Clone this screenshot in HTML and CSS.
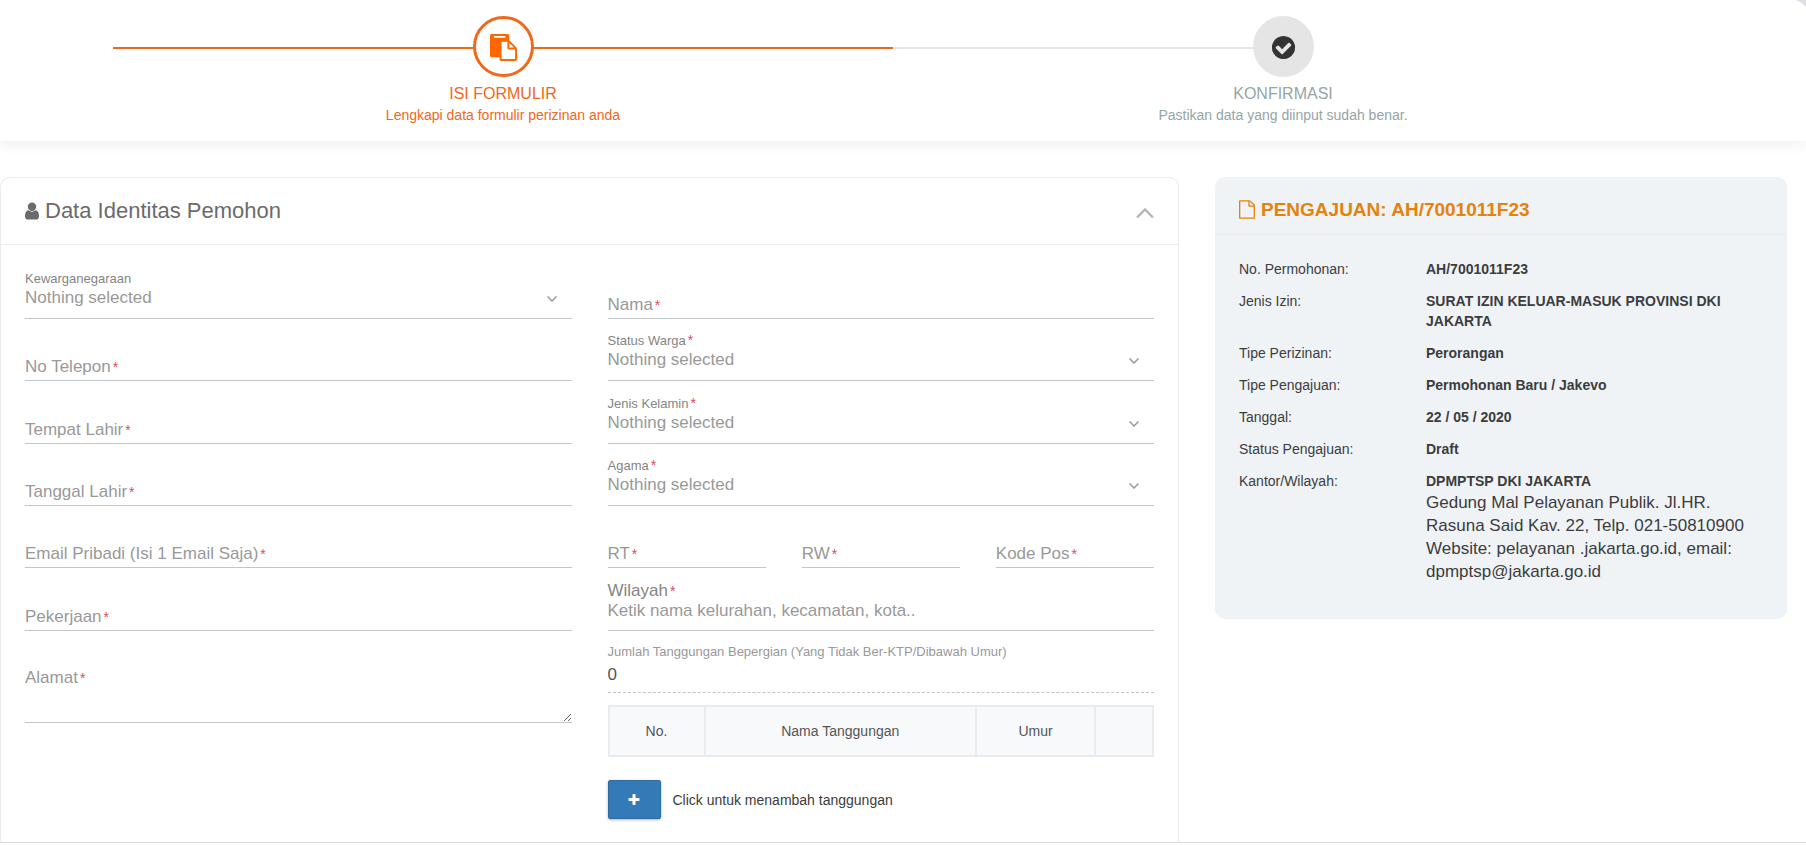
FILE: index.html
```html
<!DOCTYPE html>
<html lang="id">
<head>
<meta charset="utf-8">
<title>Formulir Perizinan</title>
<link rel="stylesheet" href="styles.css">
</head>
<body>
<header class="wizard">
  <ol class="steps">
    <li class="step step-active">
      <span class="step-mark"><svg width="27" height="27" viewBox="0 0 1792 1792" aria-hidden="true"><path fill="currentColor" d="M768 1664h896v-640h-416q-40 0-68-28t-28-68v-416h-384v1152zm256-1440v-64q0-13-9.5-22.5t-22.5-9.5h-704q-13 0-22.5 9.5t-9.5 22.5v64q0 13 9.5 22.5t22.5 9.5h704q13 0 22.5-9.5t9.5-22.5zm256 672h299l-299-299v299zm512 128v672q0 40-28 68t-68 28h-960q-40 0-68-28t-28-68v-160h-544q-40 0-68-28t-28-68v-1344q0-40 28-68t68-28h1088q40 0 68 28t28 68v328q21 13 36 28l408 408q28 28 48 76t20 88z"/></svg></span>
      <span class="step-title">ISI FORMULIR</span>
      <span class="step-note">Lengkapi data formulir perizinan anda</span>
    </li>
    <li class="step step-last">
      <span class="step-mark"><svg width="27" height="27" viewBox="0 0 1792 1792" aria-hidden="true"><path fill="currentColor" d="M1412 734q0-28-18-46l-91-90q-19-19-45-19t-45 19l-408 407-226-226q-19-19-45-19t-45 19l-91 90q-18 18-18 46 0 27 18 45l362 362q19 19 45 19 27 0 46-19l543-543q18-18 18-45zm252 162q0 209-103 385.5t-279.5 279.5-385.5 103-385.5-103-279.5-279.5-103-385.5 103-385.5 279.5-279.5 385.5-103 385.5 103 279.5 279.5 103 385.5z"/></svg></span>
      <span class="step-title">KONFIRMASI</span>
      <span class="step-note">Pastikan data yang diinput sudah benar.</span>
    </li>
  </ol>
  <svg class="corner" width="10" height="7" viewBox="0 0 10 7" aria-hidden="true"><path fill="#dcdfe3" d="M0 0h10v7Q6 2 0 0z"/></svg>
</header>

<main class="content">
  <form class="card">
    <div class="card-head">
      <svg width="14" height="20" viewBox="256 0 1280 1792" aria-hidden="true"><path fill="currentColor" d="M1536 1399q0 109-62.5 187t-150.5 78h-854q-88 0-150.5-78t-62.5-187q0-85 8.5-160.5t31.5-152 58.5-131 94-89 134.5-34.5q131 128 313 128t313-128q76 0 134.5 34.5t94 89 58.5 131 31.5 152 8.5 160.5zm-256-887q0 159-112.5 271.5t-271.5 112.5-271.5-112.5-112.5-271.5 112.5-271.5 271.5-112.5 271.5 112.5 112.5 271.5z"/></svg>
      <h2>Data Identitas Pemohon</h2>
      <button type="button" class="collapse" aria-label="Tutup panel"><svg width="18" height="11" viewBox="0 0 18 11" aria-hidden="true"><path fill="none" stroke="#b4b4b4" stroke-width="2.4" d="M1 9.5l8-8 8 8"/></svg></button>
    </div>
    <div class="card-body">
      <div class="column">
        <div class="field">
          <label class="small" for="warga">Kewarganegaraan</label>
          <div class="pick"><select id="warga"><option>Nothing selected</option></select><svg width="10" height="6" viewBox="0 0 10 6" aria-hidden="true"><path stroke-width="1.5" d="M.5.5L5 5 9.5.5"/></svg></div>
        </div>
        <div class="field float"><label for="telepon">No Telepon<i>*</i></label><input id="telepon" type="text"></div>
        <div class="field float"><label for="tempat">Tempat Lahir<i>*</i></label><input id="tempat" type="text"></div>
        <div class="field float"><label for="tanggal">Tanggal Lahir<i>*</i></label><input id="tanggal" type="text"></div>
        <div class="field float"><label for="email">Email Pribadi (Isi 1 Email Saja)<i>*</i></label><input id="email" type="text"></div>
        <div class="field float"><label for="kerja">Pekerjaan<i>*</i></label><input id="kerja" type="text"></div>
        <div class="field float area"><label for="alamat">Alamat<i>*</i></label><textarea id="alamat"></textarea></div>
      </div>
      <div class="column">
        <div class="field float"><label for="nama">Nama<i>*</i></label><input id="nama" type="text"></div>
        <div class="field">
          <label class="small" for="status">Status Warga<i>*</i></label>
          <div class="pick"><select id="status"><option>Nothing selected</option></select><svg width="10" height="6" viewBox="0 0 10 6" aria-hidden="true"><path stroke-width="1.5" d="M.5.5L5 5 9.5.5"/></svg></div>
        </div>
        <div class="field">
          <label class="small" for="kelamin">Jenis Kelamin<i>*</i></label>
          <div class="pick"><select id="kelamin"><option>Nothing selected</option></select><svg width="10" height="6" viewBox="0 0 10 6" aria-hidden="true"><path stroke-width="1.5" d="M.5.5L5 5 9.5.5"/></svg></div>
        </div>
        <div class="field">
          <label class="small" for="agama">Agama<i>*</i></label>
          <div class="pick"><select id="agama"><option>Nothing selected</option></select><svg width="10" height="6" viewBox="0 0 10 6" aria-hidden="true"><path stroke-width="1.5" d="M.5.5L5 5 9.5.5"/></svg></div>
        </div>
        <div class="field trio">
          <div class="float"><label for="rt">RT<i>*</i></label><input id="rt" type="text"></div>
          <div class="float"><label for="rw">RW<i>*</i></label><input id="rw" type="text"></div>
          <div class="float"><label for="pos">Kode Pos<i>*</i></label><input id="pos" type="text"></div>
        </div>
        <div class="field">
          <label class="strong" for="wilayah">Wilayah<i>*</i></label>
          <input class="typed" id="wilayah" type="text" placeholder="Ketik nama kelurahan, kecamatan, kota..">
        </div>
        <div class="field">
          <label class="small pale" for="jumlah">Jumlah Tanggungan Bepergian (Yang Tidak Ber-KTP/Dibawah Umur)</label>
          <input class="typed count" id="jumlah" type="text" value="0" readonly>
        </div>
        <table class="dependants">
          <thead><tr><th class="c-no">No.</th><th>Nama Tanggungan</th><th class="c-age">Umur</th><th class="c-action"></th></tr></thead>
        </table>
        <div class="add">
          <button type="button" id="tambah" aria-label="Tambah"><svg width="14" height="14" viewBox="0 0 1792 1792" aria-hidden="true"><path fill="currentColor" d="M1600 736v192q0 40-28 68t-68 28h-416v416q0 40-28 68t-68 28h-192q-40 0-68-28t-28-68v-416h-416q-40 0-68-28t-28-68v-192q0-40 28-68t68-28h416v-416q0-40 28-68t68-28h192q40 0 68 28t28 68v416h416q40 0 68 28t28 68z"/></svg></button>
          <label for="tambah">Click untuk menambah tanggungan</label>
        </div>
      </div>
    </div>
  </form>

  <aside class="summary">
    <div class="summary-head">
      <svg width="16" height="19" viewBox="128 0 1536 1792" aria-hidden="true"><path fill="currentColor" d="M1596 380q28 28 48 76t20 88v1152q0 40-28 68t-68 28h-1344q-40 0-68-28t-28-68v-1600q0-40 28-68t68-28h896q40 0 88 20t76 48zm-444-244v376h376q-10-29-22-41l-313-313q-12-12-41-22zm384 1528v-1024h-416q-40 0-68-28t-28-68v-416h-768v1536h1280z"/></svg>
      <h2>PENGAJUAN: AH/7001011F23</h2>
    </div>
    <dl>
      <dt>No. Permohonan:</dt><dd>AH/7001011F23</dd>
      <dt>Jenis Izin:</dt><dd>SURAT IZIN KELUAR-MASUK PROVINSI DKI JAKARTA</dd>
      <dt>Tipe Perizinan:</dt><dd>Perorangan</dd>
      <dt>Tipe Pengajuan:</dt><dd>Permohonan Baru / Jakevo</dd>
      <dt>Tanggal:</dt><dd>22 / 05 / 2020</dd>
      <dt>Status Pengajuan:</dt><dd>Draft</dd>
      <dt>Kantor/Wilayah:</dt><dd>DPMPTSP DKI JAKARTA<p>Gedung Mal Pelayanan Publik. Jl.HR. Rasuna Said Kav. 22, Telp. 021-50810900 Website: pelayanan .jakarta.go.id, email: dpmptsp@jakarta.go.id</p></dd>
    </dl>
  </aside>
</main>
</body>
</html>
```
FILE: styles.css
```css
* { box-sizing: border-box; }

body {
  margin: 0;
  background: #fff;
  color: #3c3c3e;
  font-family: "Liberation Sans", Arial, sans-serif;
  font-size: 14px;
}

h2, p, dl, dd, ol { margin: 0; padding: 0; }
svg { display: block; }

/* wizard steps */
.wizard {
  position: relative;
  padding: 16px 133px 16px 113px;
  box-shadow: 0 2px 14px rgba(0, 0, 0, 0.08);
}

.corner { position: absolute; top: 0; right: 0; }

.steps {
  display: grid;
  grid-template-columns: 1fr 1fr;
  list-style: none;
}

.step {
  display: flex;
  flex-direction: column;
  align-items: center;
  color: #95a5a6;
  background: linear-gradient(#e5e5e5, #e5e5e5) 0 31px / 100% 2px no-repeat;
}

.step-active {
  color: #f0681a;
  background-image: linear-gradient(#f0681a, #f0681a);
}

.step-last { background-size: 50% 2px; }

.step-mark {
  display: grid;
  place-items: center;
  width: 61px;
  height: 61px;
  padding-top: 2px;
  border-radius: 50%;
  background: #e5e5e5;
  color: #333;
}

.step-active .step-mark {
  border: 3px solid #f0681a;
  background: #fff;
  color: #f60;
}

.step-title { margin-top: 6px; font-size: 16px; line-height: 22px; }
.step-note { font-size: 14px; line-height: 20px; }

/* page body */
.content {
  display: grid;
  grid-template-columns: 1179fr 572fr;
  align-items: start;
  gap: 36px;
  padding: 36px 19px 0 0;
  border-bottom: 1px solid #d9dcdc;
}

.card {
  border: 1px solid #e9ecec;
  border-bottom: 0;
  border-radius: 10px 10px 0 0;
}

.card-head {
  display: flex;
  align-items: center;
  gap: 6px;
  height: 67px;
  padding: 0 24px;
  border-bottom: 1px solid #eceeee;
  color: #6b6b6b;
}

.card-head h2 { font-size: 22px; line-height: 30px; font-weight: 400; }

.collapse {
  margin-left: auto;
  padding: 4px 0 0;
  border: 0;
  background: none;
}

.card-body {
  display: grid;
  grid-template-columns: 1fr 1fr;
  gap: 36px;
  padding: 0 24px 23px;
}

/* form fields */
.field {
  display: flex;
  flex-direction: column;
  justify-content: flex-end;
  height: 62px;
}

.field:nth-child(3n) { height: 63px; }
.field:first-child { height: 74px; }

label { color: #999; }

label i {
  margin-left: 2px;
  color: #dc4c55;
  font-size: 14px;
  font-style: normal;
}

.small { font-size: 13px; line-height: 16px; color: #858585; }
.pale { color: #999; line-height: 24px; }
.strong { font-size: 17px; line-height: 18px; color: #858585; }

input, select, textarea {
  width: 100%;
  border: 0;
  border-bottom: 1px solid #c2c7cb;
  border-radius: 0;
  background: transparent;
  color: #555;
  font: inherit;
  font-size: 17px;
  outline: 0;
}

.float { display: grid; }
.field.float { align-content: end; justify-content: stretch; }
.float label, .float input, .float textarea { grid-area: 1 / 1; }
.float label { font-size: 17px; line-height: 22px; }
.float input { height: 25px; padding: 0; }
.float textarea { height: 56px; padding: 0; resize: vertical; }
.field.area { height: auto; padding-top: 36px; }

.field.trio {
  display: grid;
  grid-template-columns: repeat(3, 1fr);
  gap: 36px;
  align-content: end;
  justify-content: stretch;
}

.pick { display: grid; align-items: start; }

.pick select {
  grid-area: 1 / 1;
  height: 32px;
  padding: 0 0 9px;
  line-height: 22px;
  appearance: none;
  color: #999;
}

.pick svg {
  grid-area: 1 / 1;
  justify-self: end;
  margin: 9px 15px 0 0;
  fill: none;
  stroke: #999;
  pointer-events: none;
}

.typed { height: 31px; padding: 0 0 8px; line-height: 22px; }
.typed::placeholder { color: #999; opacity: 1; }

.count {
  height: 29px;
  padding-bottom: 6px;
  border-bottom: 1px dashed #c3c3cb;
}

/* dependants */
.dependants {
  width: 100%;
  margin-top: 12px;
  border-collapse: collapse;
  table-layout: fixed;
}

.dependants th {
  height: 50px;
  padding: 0;
  border: 2px solid #e9ecee;
  background: #f7f9fb;
  color: #555;
  font-weight: 400;
}

.c-no { width: 96px; }
.c-age { width: 119px; }
.c-action { width: 58px; }

.add {
  display: flex;
  align-items: center;
  gap: 12px;
  margin-top: 23px;
}

.add label { color: #3c3c3e; }

.add button {
  display: grid;
  place-items: center;
  width: 53px;
  height: 39px;
  padding: 0;
  border: 1px solid #2e6da4;
  border-radius: 2px;
  background: #337ab7;
  box-shadow: 0 1px 3px rgba(0, 0, 0, 0.3);
  color: #fff;
}

/* application summary */
.summary { border-radius: 10px; background: #eff3f6; }

.summary-head {
  display: flex;
  align-items: center;
  gap: 6px;
  height: 58px;
  padding: 8px 24px 0;
  border-bottom: 1px solid #e9edf0;
  color: #e5820c;
}

.summary-head h2 { font-size: 19px; line-height: 26px; }

.summary dl {
  display: grid;
  grid-template-columns: 175px 1fr;
  gap: 12px;
  padding: 24px 24px 36px;
  line-height: 20px;
}

.summary dd { font-weight: 700; }
.summary dd p { font-size: 17px; line-height: 23px; font-weight: 400; }
```
